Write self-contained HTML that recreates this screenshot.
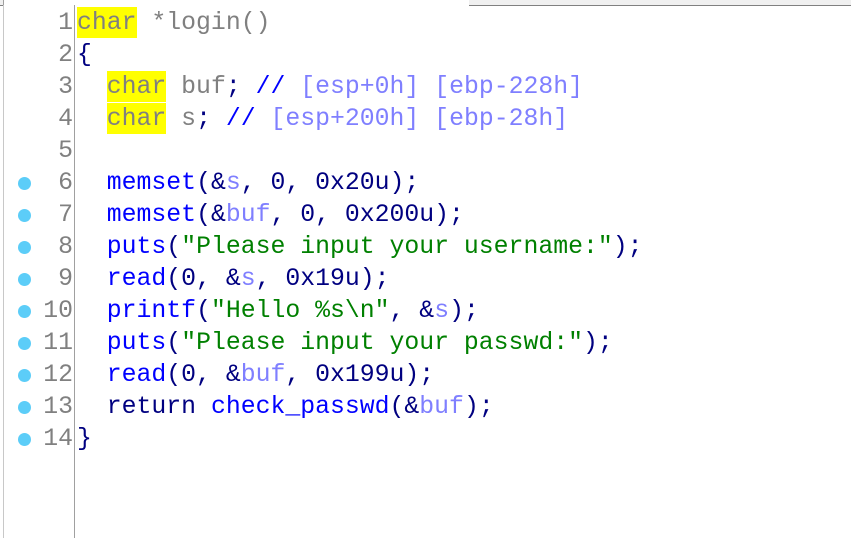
<!DOCTYPE html>
<html><head><style>
html,body{margin:0;padding:0;background:#fff;width:851px;height:538px;overflow:hidden;position:relative}
.top{position:absolute;left:0;top:0;width:851px;height:5px;background:#f0f0f0;border-bottom:1px solid #808080}
.tab1{position:absolute;left:3px;top:0;width:71px;height:6px;background:#fff;border-left:1px solid #a0a0a0}
.tab2{position:absolute;left:74px;top:0;width:395px;height:6px;background:#fff}
.gut{position:absolute;left:74px;top:5px;width:1px;height:533px;background:#a0a0a0}
.lb{position:absolute;left:3px;top:5px;width:1px;height:533px;background:#c8c8c8}
.code{position:absolute;left:0;top:7px;font-family:"Liberation Mono","DejaVu Sans Mono",monospace;font-size:24.8px;line-height:32px}
.row{height:32px;position:relative;white-space:pre}
.n{position:absolute;left:0;width:73px;text-align:right;color:#808080}
.t{position:absolute;left:77px;color:#808080}
.dot{position:absolute;left:18px;top:10px;width:13px;height:13px;border-radius:50%;background:#5ccdf8}
.k{background:#ffff00;color:#808080;display:inline-block;height:31px;vertical-align:top}
.nv{color:#000080}.b{color:#0000ff}.v{color:#7f7fff}.g{color:#008000}.gr{color:#808080}
</style></head><body>
<div class="top"></div><div class="tab2"></div><div class="tab1"></div>
<div class="lb"></div><div class="gut"></div>
<div class="code"><div class="row"><span class="n">1</span><span class="t"><span class="k">char</span> *login()</span></div><div class="row"><span class="n">2</span><span class="t"><span class="nv">{</span></span></div><div class="row"><span class="n">3</span><span class="t">  <span class="k">char</span> buf<span class="nv">;</span> <span class="b">//</span> <span class="v">[esp+0h] [ebp-228h]</span></span></div><div class="row"><span class="n">4</span><span class="t">  <span class="k">char</span> s<span class="nv">;</span> <span class="b">//</span> <span class="v">[esp+200h] [ebp-28h]</span></span></div><div class="row"><span class="n">5</span></div><div class="row"><span class="dot"></span><span class="n">6</span><span class="t">  <span class="b">memset</span><span class="nv">(&amp;</span><span class="v">s</span><span class="nv">, 0, 0x20u);</span></span></div><div class="row"><span class="dot"></span><span class="n">7</span><span class="t">  <span class="b">memset</span><span class="nv">(&amp;</span><span class="v">buf</span><span class="nv">, 0, 0x200u);</span></span></div><div class="row"><span class="dot"></span><span class="n">8</span><span class="t">  <span class="b">puts</span><span class="nv">(</span><span class="g">"Please input your username:"</span><span class="nv">);</span></span></div><div class="row"><span class="dot"></span><span class="n">9</span><span class="t">  <span class="b">read</span><span class="nv">(0, &amp;</span><span class="v">s</span><span class="nv">, 0x19u);</span></span></div><div class="row"><span class="dot"></span><span class="n">10</span><span class="t">  <span class="b">printf</span><span class="nv">(</span><span class="g">"Hello %s\n"</span><span class="nv">, &amp;</span><span class="v">s</span><span class="nv">);</span></span></div><div class="row"><span class="dot"></span><span class="n">11</span><span class="t">  <span class="b">puts</span><span class="nv">(</span><span class="g">"Please input your passwd:"</span><span class="nv">);</span></span></div><div class="row"><span class="dot"></span><span class="n">12</span><span class="t">  <span class="b">read</span><span class="nv">(0, &amp;</span><span class="v">buf</span><span class="nv">, 0x199u);</span></span></div><div class="row"><span class="dot"></span><span class="n">13</span><span class="t">  <span class="nv">return</span> <span class="b">check_passwd</span><span class="nv">(&amp;</span><span class="v">buf</span><span class="nv">);</span></span></div><div class="row"><span class="dot"></span><span class="n">14</span><span class="t"><span class="nv">}</span></span></div></div>
</body></html>
